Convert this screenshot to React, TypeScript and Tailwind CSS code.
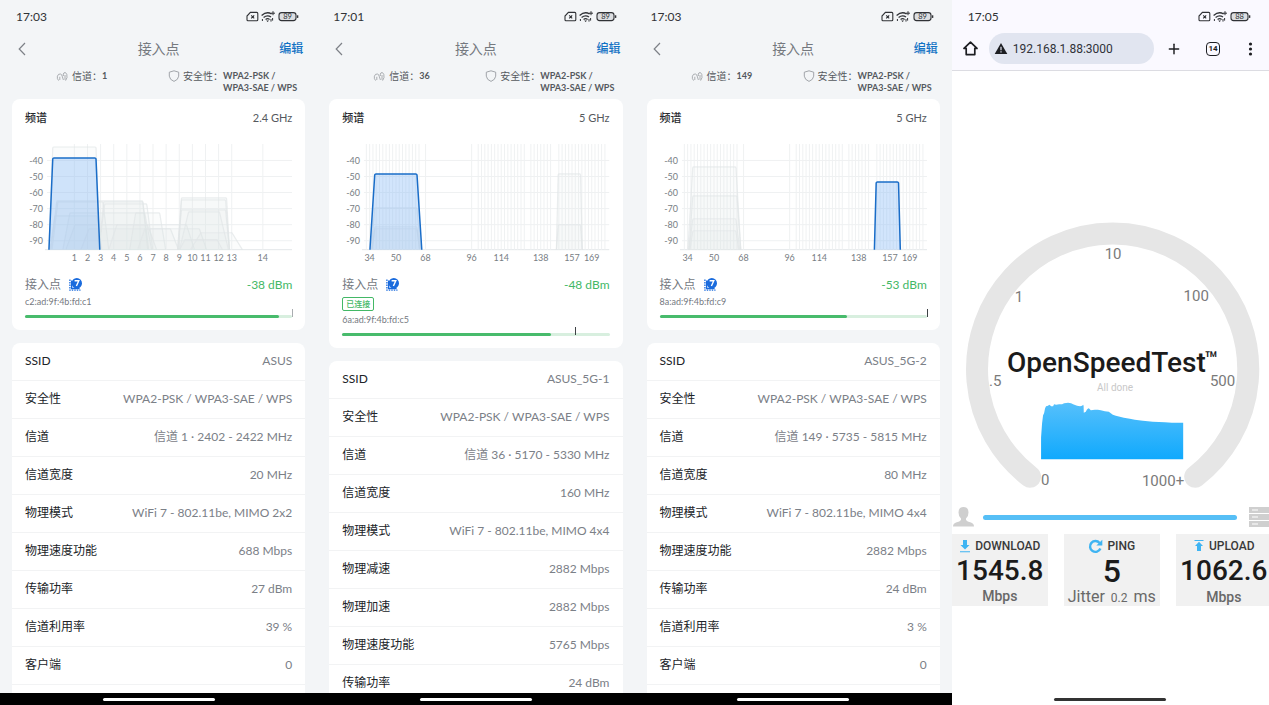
import { Plus } from 'lucide-react';

type Curve = { from: number; to: number; top: number; spread?: number };

type AccessPoint = {
  time: string;
  channel: string;
  band: string;
  wide: boolean;
  main: Curve;
  others: Curve[];
  signal: string;
  mac: string;
  connected?: boolean;
  level: number;
  mark: number;
  markClass: string;
  rows: [string, string][];
};

const accessPoints: AccessPoint[] = [
  {
    time: '17:03',
    channel: '1',
    band: '2.4 GHz',
    wide: false,
    main: { from: 28, to: 71, top: 18, spread: 4 },
    others: [
      { from: 28, to: 71, top: 7, spread: 4 },
      { from: 32, to: 118, top: 61, spread: 6 },
      { from: 33, to: 78, top: 62, spread: 6 },
      { from: 79, to: 118, top: 62, spread: 5 },
      { from: 80, to: 122, top: 64, spread: 6 },
      { from: 30, to: 72, top: 76, spread: 5 },
      { from: 45, to: 120, top: 73, spread: 7 },
      { from: 111, to: 135, top: 73, spread: 6 },
      { from: 50, to: 123, top: 85, spread: 9 },
      { from: 64, to: 146, top: 89, spread: 8 },
      { from: 92, to: 162, top: 85, spread: 8 },
      { from: 120, to: 175, top: 89, spread: 7 },
      { from: 157, to: 202, top: 58, spread: 3 },
      { from: 157, to: 201, top: 60, spread: 4 },
      { from: 157, to: 201, top: 70, spread: 4 },
      { from: 164, to: 195, top: 72, spread: 9 },
      { from: 160, to: 193, top: 100, spread: 5 },
      { from: 176, to: 208, top: 93, spread: 10 },
    ],
    signal: '-38 dBm',
    mac: 'c2:ad:9f:4b:fd:c1',
    level: 95,
    mark: 100,
    markClass: 'bg-[#a9adb0]',
    rows: [
      ['SSID', 'ASUS'],
      ['安全性', 'WPA2-PSK / WPA3-SAE / WPS'],
      ['信道', '信道 1 · 2402 - 2422 MHz'],
      ['信道宽度', '20 MHz'],
      ['物理模式', 'WiFi 7 - 802.11be, MIMO 2x2'],
      ['物理速度功能', '688 Mbps'],
      ['传输功率', '27 dBm'],
      ['信道利用率', '39 %'],
      ['客户端', '0'],
    ],
  },
  {
    time: '17:01',
    channel: '36',
    band: '5 GHz',
    wide: true,
    main: { from: 33, to: 75, top: 34, spread: 5 },
    others: [
      { from: 33, to: 75, top: 68, spread: 4 },
      { from: 33, to: 75, top: 87, spread: 3 },
      { from: 33, to: 75, top: 89, spread: 3 },
      { from: 217, to: 239, top: 34, spread: 2 },
      { from: 217, to: 239, top: 85, spread: 2 },
    ],
    signal: '-48 dBm',
    mac: '6a:ad:9f:4b:fd:c5',
    connected: true,
    level: 78,
    mark: 87,
    markClass: 'bg-[#3d4144]',
    rows: [
      ['SSID', 'ASUS_5G-1'],
      ['安全性', 'WPA2-PSK / WPA3-SAE / WPS'],
      ['信道', '信道 36 · 5170 - 5330 MHz'],
      ['信道宽度', '160 MHz'],
      ['物理模式', 'WiFi 7 - 802.11be, MIMO 4x4'],
      ['物理减速', '2882 Mbps'],
      ['物理加速', '2882 Mbps'],
      ['物理速度功能', '5765 Mbps'],
      ['传输功率', '24 dBm'],
    ],
  },
  {
    time: '17:03',
    channel: '149',
    band: '5 GHz',
    wide: true,
    main: { from: 217, to: 239, top: 42, spread: 2 },
    others: [
      { from: 33, to: 76, top: 27, spread: 5 },
      { from: 33, to: 77, top: 56, spread: 4 },
      { from: 33, to: 76, top: 79, spread: 4 },
      { from: 33, to: 76, top: 91, spread: 3 },
    ],
    signal: '-53 dBm',
    mac: '8a:ad:9f:4b:fd:c9',
    level: 70,
    mark: 100,
    markClass: 'bg-[#3d4144]',
    rows: [
      ['SSID', 'ASUS_5G-2'],
      ['安全性', 'WPA2-PSK / WPA3-SAE / WPS'],
      ['信道', '信道 149 · 5735 - 5815 MHz'],
      ['信道宽度', '80 MHz'],
      ['物理模式', 'WiFi 7 - 802.11be, MIMO 4x4'],
      ['物理速度功能', '2882 Mbps'],
      ['传输功率', '24 dBm'],
      ['信道利用率', '3 %'],
      ['客户端', '0'],
    ],
  },
];

const PLOT_BOTTOM = 110;
const levels = [-40, -50, -60, -70, -80, -90];

const range = (start: number, end: number, step: number) =>
  Array.from({ length: Math.floor((end - start) / step) + 1 }, (_, i) => start + i * step);

const x24 = (ch: number) => (ch === 14 ? 238.5 : 49.5 + (ch - 1) * 13.15);
const x5 = (ch: number) => 27.7 + (ch - 34) * 1.65;

const ticks24 = range(1, 14, 1);
const ticks5 = [34, 50, 68, 96, 114, 138, 157, 169];
const lines5 = [...range(32, 64, 2), 68, 96, ...range(100, 128, 2), ...range(132, 144, 2), ...range(149, 177, 2)];

function curvePath({ from, to, top, spread = 4 }: Curve) {
  return `M${from - spread} ${PLOT_BOTTOM} L${from - 0.2} ${top + 1} Q${from} ${top} ${from + 1} ${top} H${to - 1} Q${to} ${top} ${to + 0.2} ${top + 1} L${to + spread} ${PLOT_BOTTOM}`;
}

function SpectrumChart({ ap }: { ap: AccessPoint }) {
  const toX = ap.wide ? x5 : x24;
  const ticks = ap.wide ? ticks5 : ticks24;
  const lines = ap.wide ? lines5 : ticks24;

  return (
    <svg viewBox="0 0 268 123" className="mt-[11px] block w-full" role="img" aria-label="频谱">
      <g stroke="#eff1f2" strokeWidth="1">
        {levels.map((level, i) => (
          <line key={level} x1="22" x2="268" y1={20.5 + i * 16.1} y2={20.5 + i * 16.1} />
        ))}
        <line x1="20" x2="268" y1={PLOT_BOTTOM} y2={PLOT_BOTTOM} stroke="#e4e7e9" />
        {lines.map((ch) => (
          <line key={ch} x1={toX(ch)} x2={toX(ch)} y1="4" y2={PLOT_BOTTOM} />
        ))}
      </g>
      <g fill="#dfe5e6" fillOpacity="0.12" stroke="#e1e6e7" strokeWidth="1.2" strokeOpacity="0.7">
        {ap.others.map((curve, i) => (
          <path key={i} d={curvePath(curve)} />
        ))}
      </g>
      <path d={curvePath(ap.main)} fill="#7db4f5" fillOpacity="0.35" stroke="#1a6dc8" strokeWidth="1.5" />
      <g fill="#777d83" fontSize="9">
        {levels.map((level, i) => (
          <text key={level} x="18" y={24 + i * 16.1} textAnchor="end">
            {level}
          </text>
        ))}
        {ticks.map((ch) => (
          <text key={ch} x={toX(ch)} y="121" textAnchor="middle">
            {ch}
          </text>
        ))}
      </g>
    </svg>
  );
}

function StatusBar({ time, battery }: { time: string; battery: string }) {
  return (
    <div className="flex h-[33px] items-center justify-between pr-[18px] pl-4 text-[#303236]">
      <span className="text-[12px]">{time}</span>
      <svg width="53" height="13" viewBox="0 0 53 13" fill="none" stroke="currentColor" strokeWidth="1.1">
        <path d="M4.400 2.400h6.400q1 0 1 1v6.400q0 1-1 1H2q-1 0-1-1V6z" />
        <path d="m5.200 5.400 3 3M8.200 5.400l-3 3" />
        <path d="M15.600 5.400q5.200-4.400 10-1.400M17.600 7.400q3.800-3 7.400-.4M19.600 9.400q2-1.500 4 0" strokeWidth="1.300" />
        <path d="M27 1.200v4M25 3.200h4M26.600 8v2.600M16.400 9v2M25 9v2.600" strokeWidth="1" />
        <path d="m20.200 10.600 1.400 1.400 1.400-1.400z" fill="currentColor" stroke="none" />
        <rect x="33" y="2.600" width="17" height="8" rx="2.600" fill="#dcdee1" />
        <path d="M51.600 5.300v2.600" strokeWidth="1.400" />
        <text x="41.500" y="9.400" textAnchor="middle" fontSize="7.500" fill="currentColor" stroke="none">
          {battery}
        </text>
      </svg>
    </div>
  );
}

function Wifi7Badge() {
  return (
    <svg width="13" height="13" viewBox="0 0 13 13" className="ml-2">
      <path d="M.9 1.600v10.600h10.600" fill="none" stroke="#1a6bdd" strokeWidth="1.300" strokeDasharray="1.400 1.100" />
      <path d="M2.600 2.500v8h8" fill="none" stroke="#1a6bdd" strokeWidth="1.300" />
      <circle cx="7.800" cy="5.200" r="5.200" fill="#1a6bdd" />
      <path d="M5.600 2.700h4.200L7.400 8" fill="none" stroke="#fff" strokeWidth="1.400" />
    </svg>
  );
}

function InfoRow({ channel }: { channel: string }) {
  return (
    <div className="flex items-start pt-[6px] pb-[5px] pl-14 text-[10px] leading-[12px] text-[#55595e]">
      <div className="flex w-28 shrink-0 items-start">
        <svg width="12" height="12" viewBox="0 0 12 12" className="mr-1 shrink-0" fill="none" stroke="#979ba0">
          <path
            d="M2.600 10.600Q.8 8.600 1.400 6.200 2.200 3.600 4.400 4q1.600.4 1.800 2.200L7.400 10M3.800 10V6.800M9.600 10.600q2.200-3 1.200-6.200Q9.800 1.800 8 2.800 6.800 3.800 7.400 6M9 9.800V5"
            strokeWidth=".8"
          />
        </svg>
        <span>信道：</span>
        <b className="text-[9px] font-bold">{channel}</b>
      </div>
      <svg width="12" height="12" viewBox="0 0 12 12" className="mr-[3px] shrink-0" fill="none" stroke="#979ba0">
        <path d="M6 .8 10.700 2.200v4Q10.300 9.800 6 11.400 1.700 9.800 1.300 6.200v-4z" strokeWidth=".9" />
      </svg>
      <span className="shrink-0">安全性：</span>
      <b className="text-[9px] font-bold whitespace-nowrap">
        WPA2-PSK /<br />
        WPA3-SAE / WPS
      </b>
    </div>
  );
}

function AccessPointScreen({ ap }: { ap: AccessPoint }) {
  return (
    <section className="flex min-w-0 flex-col overflow-hidden bg-[#f3f5f7] font-['Lato','Noto_Sans_CJK_SC',sans-serif]">
      <StatusBar time={ap.time} battery="89" />
      <header className="grid h-[31px] shrink-0 grid-cols-[1fr_auto_1fr] items-center px-[14px]">
        <button type="button" aria-label="返回" className="justify-self-start pl-1 text-[#7d8187]">
          <svg width="8" height="14" viewBox="0 0 8 14" fill="none" stroke="currentColor" strokeWidth="1.200">
            <path d="M7 1 1.200 7 7 13" />
          </svg>
        </button>
        <h1 className="text-[14px] text-[#75797f]">接入点</h1>
        <button type="button" className="justify-self-end text-[12px] font-medium text-[#1272c4]">
          编辑
        </button>
      </header>
      <InfoRow channel={ap.channel} />
      <main className="min-h-0 flex-1 overflow-hidden px-3">
        <div className="rounded-lg bg-white px-[13px] pt-2 pb-3">
          <div className="flex h-[22px] items-center justify-between text-[11px]">
            <h2 className="font-medium text-[#25282c]">频谱</h2>
            <span className="text-[#55595e]">{ap.band}</span>
          </div>
          <SpectrumChart ap={ap} />
          <div className="mt-3 flex h-5 items-center text-[12px] text-[#75797f]">
            <span>接入点</span>
            <Wifi7Badge />
            <span className="ml-auto text-[12px] text-[#43b866]">{ap.signal}</span>
          </div>
          {ap.connected && (
            <div className="my-[2px] flex h-[14px]">
              <span className="flex items-center rounded-[2px] border border-[#43b866] px-[3px] text-[8px] font-medium text-[#43b866]">
                已连接
              </span>
            </div>
          )}
          <div className="h-[14px] text-[9px] leading-[14px] text-[#75797f]">{ap.mac}</div>
          <div className="relative flex h-[9px] items-end">
            <div className="h-[3px] w-full rounded-full bg-[#d8efdf]">
              <div className="h-full rounded-full bg-[#48bb6c]" style={{ width: `${ap.level}%` }} />
            </div>
            <span className={`absolute top-0 h-2 w-px ${ap.markClass}`} style={{ left: `${ap.mark}%` }} />
          </div>
        </div>
        <dl className="mt-[13px] rounded-t-lg bg-white">
          {ap.rows.map(([label, value]) => (
            <div
              key={label}
              className="flex h-[38px] items-center justify-between border-b border-[#f2f3f4] px-[13px]"
            >
              <dt className="text-[12px] text-[#202327]">{label}</dt>
              <dd className="text-[12px] text-[#7b8087]">{value}</dd>
            </div>
          ))}
          <div className="h-[38px]" />
        </dl>
      </main>
      <footer className="flex h-3 shrink-0 items-center justify-center bg-black">
        <span className="h-[3px] w-28 rounded-full bg-white" />
      </footer>
    </section>
  );
}

function Gauge() {
  return (
    <svg viewBox="0 0 317 280" className="mt-36 block w-full shrink-0 font-['Roboto',sans-serif]">
      <defs>
        <linearGradient id="speed" x1="0" y1="0" x2="0" y2="1">
          <stop offset="0" stopColor="#56c0fb" />
          <stop offset="1" stopColor="#10a9fd" />
        </linearGradient>
      </defs>
      <path
        d="M78 261.500A135.500 135.500 0 1 1 243 261.500"
        fill="none"
        stroke="#e6e6e6"
        strokeWidth="22"
        strokeLinecap="round"
      />
      <g fill="#7a7a7a" fontSize="15">
        <text x="161" y="44" textAnchor="middle">10</text>
        <text x="67" y="87" textAnchor="middle">1</text>
        <text x="244" y="86" textAnchor="middle">100</text>
        <text x="37" y="171">.5</text>
        <text x="283" y="171" textAnchor="end">500</text>
        <text x="89" y="270">0</text>
        <text x="232" y="271" textAnchor="end">1000+</text>
      </g>
      <g fill="#1b1b1b" fontWeight="500">
        <text x="55" y="157" fontSize="28">OpenSpeedTest</text>
        <text x="252" y="152" fontSize="22">™</text>
      </g>
      <text x="163" y="176" fontSize="10" fill="#c8c8c8" textAnchor="middle">
        All done
      </text>
      <path
        d="M89 244V222l1-14 1-8 1-2 1-5 1-2 2-.5 1-1 1 .5 1 1 2 0 1-2 2 .5 3-.5 3 0 2-1 4-.5 3 .5 2 1 4 1.500 3 .5 2-.5 1-1 .5 1 .2 7 2-1 1-2 1-1 1-.5 2 2 4-.5 3 0 3 .5 4 1 4 .5 4 3 3 1 4 1 4 1 6 1 5 1 8 1 10 1 12 .5 7 .5H231V244z"
        fill="url(#speed)"
      />
    </svg>
  );
}

function DownloadIcon() {
  return (
    <svg width="12" height="14" viewBox="0 0 12 14" fill="#3fb4f2">
      <path d="M4 1h4v5h2.500L6 10.500 1.500 6H4zM1 12.300h10v1H1z" />
    </svg>
  );
}

function PingIcon() {
  return (
    <svg width="15" height="15" viewBox="0 0 15 15" fill="none" stroke="#3fb4f2" strokeWidth="2.400">
      <path d="M12.400 9.600A5.400 5.400 0 1 1 11.600 4" />
      <path d="M14.300.8v5.600H8.400z" fill="#3fb4f2" stroke="none" />
    </svg>
  );
}

function UploadIcon() {
  return (
    <svg width="12" height="14" viewBox="0 0 12 14" fill="#3fb4f2">
      <path d="M4 12h4V7h2L6 2.800 2 7h2zM1.500 1h9v1h-9z" />
    </svg>
  );
}

function BrowserScreen() {
  return (
    <section className="flex min-w-0 flex-col overflow-hidden bg-white font-['Roboto',sans-serif]">
      <div className="h-[71px] shrink-0 border-b border-[#dcdce2] bg-[#faf9ff]">
        <div className="font-['Lato',sans-serif]">
          <StatusBar time="17:05" battery="88" />
        </div>
        <div className="flex h-[31px] items-center pr-4 pl-[11px] text-[#1d1e22]">
          <button type="button" aria-label="Home">
            <svg width="15" height="15" viewBox="0 0 15 15" fill="none" stroke="currentColor" strokeWidth="1.700">
              <path d="M7.500 1.200 1 7.400h2.200v6.200h8.600V7.400H14z" strokeLinejoin="round" />
            </svg>
          </button>
          <label className="ml-[11px] flex h-[31px] min-w-0 flex-1 items-center gap-[5px] rounded-full bg-[#e1e5f0] pl-[5px]">
            <svg width="14" height="13" viewBox="0 0 15 14" className="shrink-0">
              <path d="M7.500 1 14.300 13H.7z" fill="#1d1e22" />
              <path d="M7.500 5v4M7.500 10v1.400" stroke="#e1e5f0" strokeWidth="1.300" />
            </svg>
            <input
              aria-label="Address"
              defaultValue="192.168.1.88:3000"
              className="w-full min-w-0 bg-transparent text-[12px] text-[#303238] outline-none"
            />
          </label>
          <button type="button" aria-label="New tab" className="ml-3">
            <Plus className="h-4 w-4" strokeWidth={2.2} />
          </button>
          <button
            type="button"
            aria-label="Tabs"
            className="ml-6 flex h-[14px] w-[14px] items-center justify-center rounded-[4px] border-[1.5px] border-[#1d1e22] text-[8px] font-bold"
          >
            14
          </button>
          <button type="button" aria-label="Menu" className="ml-7">
            <svg width="5" height="14" viewBox="0 0 5 14" fill="currentColor">
              <circle cx="2.500" cy="2" r="1.600" />
              <circle cx="2.500" cy="7" r="1.600" />
              <circle cx="2.500" cy="12" r="1.600" />
            </svg>
          </button>
        </div>
      </div>
      <main className="flex min-h-0 flex-1 flex-col overflow-hidden">
        <Gauge />
        <div className="mt-3 flex h-5 shrink-0 items-center">
          <svg width="22" height="20" viewBox="0 0 22 20" className="shrink-0" fill="#cfcfcf">
            <path d="M11.500 0q5 0 5 5.500 0 4-2.500 6v1.500q1 1.500 5 2.500 3 1 3 4H1q0-3 3-4 4-1 5-2.500v-1.500q-2.500-2-2.500-6Q6.500 0 11.500 0z" />
          </svg>
          <div className="mr-3 ml-[9px] h-[5px] flex-1 rounded-full bg-[#56bff6]" />
          <svg width="20" height="20" viewBox="0 0 20 20" className="shrink-0">
            <path d="M0 0h20v6H0zM0 7h20v6H0zM0 14h20v6H0z" fill="#cfcfcf" />
            <path d="M3 3h6M3 10h6M3 17h6" stroke="#fff" strokeWidth="1.200" />
          </svg>
        </div>
        <div className="mt-[7px] flex gap-4 text-center text-[#1b1b1b]">
          <div className="h-[72px] w-24 shrink-0 bg-[#f1f1f1] pt-1">
            <div className="flex h-4 items-center justify-center gap-1 text-[12px] font-medium text-[#3a3a3a]">
              <DownloadIcon />
              DOWNLOAD
            </div>
            <div className="text-[28px] leading-[34px] font-medium">1545.8</div>
            <div className="text-[14px] leading-[16px] font-medium text-[#686868]">Mbps</div>
          </div>
          <div className="h-[72px] w-24 shrink-0 bg-[#f1f1f1] pt-1">
            <div className="flex h-4 items-center justify-center gap-1 text-[12px] font-medium text-[#3a3a3a]">
              <PingIcon />
              PING
            </div>
            <div className="text-[32px] leading-[34px] font-medium">5</div>
            <div className="text-[16px] leading-[18px] whitespace-nowrap text-[#686868]">
              Jitter <span className="mx-[2px] text-[12px]">0.2</span> ms
            </div>
          </div>
          <div className="h-[72px] w-24 shrink-0 bg-[#f1f1f1] pt-1">
            <div className="flex h-4 items-center justify-center gap-1 text-[12px] font-medium text-[#3a3a3a]">
              <UploadIcon />
              UPLOAD
            </div>
            <div className="text-[28px] leading-[34px] font-medium">1062.6</div>
            <div className="text-[14px] leading-[18px] font-medium text-[#686868]">Mbps</div>
          </div>
        </div>
      </main>
      <footer className="flex h-3 shrink-0 items-center justify-center">
        <span className="h-[3px] w-28 rounded-full bg-[#333]" />
      </footer>
    </section>
  );
}

export default function App() {
  return (
    <div className="grid h-screen grid-cols-4 grid-rows-1 overflow-hidden">
      {accessPoints.map((ap) => (
        <AccessPointScreen key={ap.channel} ap={ap} />
      ))}
      <BrowserScreen />
    </div>
  );
}
